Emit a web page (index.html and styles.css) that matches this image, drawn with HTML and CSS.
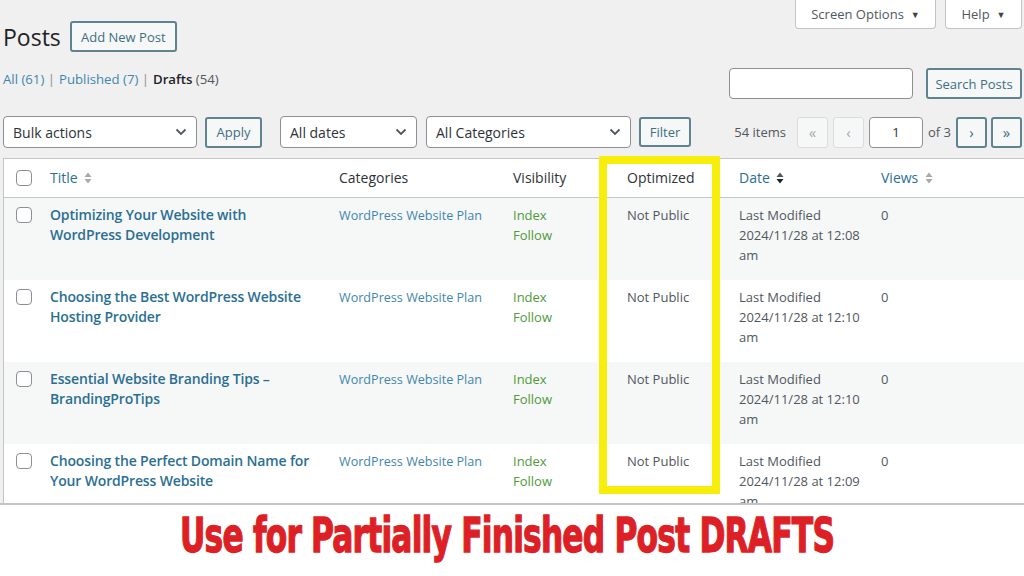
FILE: index.html
```html
<!DOCTYPE html>
<html lang="en">
<head>
    <meta charset="UTF-8">
    <meta name="viewport" content="width=device-width, initial-scale=1.0">
    <title>Posts</title>
    <link rel="stylesheet" href="styles.css">
</head>
<body>
    <div class="screen">
        <div class="top">
            <div class="heading">
                <h1>Posts</h1>
                <a class="btn" href="#">Add New Post</a>
            </div>
            <div class="meta">
                <span class="meta-tab tab-options">Screen Options <i class="caret">&#9660;</i></span>
                <span class="meta-tab tab-help">Help <i class="caret">&#9660;</i></span>
            </div>
        </div>

        <div class="views-row">
            <ul class="subsubsub">
                <li><a href="#">All <span class="count">(61)</span></a> |</li>
                <li><a href="#">Published <span class="count">(7)</span></a> |</li>
                <li><b>Drafts</b> <span class="count">(54)</span></li>
            </ul>
            <div class="search">
                <span class="search-input"></span>
                <a class="btn" href="#">Search Posts</a>
            </div>
        </div>

        <div class="tablenav">
            <span class="select w-bulk">Bulk actions <svg viewBox="0 0 12 8"><path d="M1.5 1.5 6 6l4.5-4.5" fill="none" stroke="#50575e" stroke-width="1.8"/></svg></span>
            <a class="btn" href="#">Apply</a>
            <span class="select w-dates">All dates <svg viewBox="0 0 12 8"><path d="M1.5 1.5 6 6l4.5-4.5" fill="none" stroke="#50575e" stroke-width="1.8"/></svg></span>
            <span class="select w-cats">All Categories <svg viewBox="0 0 12 8"><path d="M1.5 1.5 6 6l4.5-4.5" fill="none" stroke="#50575e" stroke-width="1.8"/></svg></span>
            <a class="btn btn-small" href="#">Filter</a>
            <div class="pages">
                <span class="num">54 items</span>
                <span class="pg off">&laquo;</span>
                <span class="pg off">&lsaquo;</span>
                <span class="pg-input">1</span>
                <span class="of">of 3</span>
                <span class="pg">&rsaquo;</span>
                <span class="pg">&raquo;</span>
            </div>
        </div>

        <table class="posts">
            <thead>
                <tr>
                    <th class="c-cb"><span class="cb"></span></th>
                    <th class="c-title">Title <svg class="sort" viewBox="0 0 8 12"><path d="M4 0.5 7.5 5h-7zM4 11.5 0.5 7h7z" fill="#a7aaad"/></svg></th>
                    <th class="c-cat plain">Categories</th>
                    <th class="c-vis plain">Visibility</th>
                    <th class="c-opt plain">Optimized</th>
                    <th class="c-date">Date <svg class="sort" viewBox="0 0 8 12"><path d="M4 0.5 7.5 5h-7z" fill="#50575e"/><path d="M4 11.5 0.5 7h7z" fill="#1d2327"/></svg></th>
                    <th class="c-views">Views <svg class="sort" viewBox="0 0 8 12"><path d="M4 0.5 7.5 5h-7zM4 11.5 0.5 7h7z" fill="#a7aaad"/></svg></th>
                </tr>
            </thead>
            <tbody>
                <tr>
                    <td><span class="cb"></span></td>
                    <td class="t-cell"><a class="title" href="#">Optimizing Your Website with WordPress Development</a></td>
                    <td><a class="cat" href="#">WordPress Website Plan</a></td>
                    <td class="seo">Index<br>Follow</td>
                    <td>Not Public</td>
                    <td>Last Modified<br>2024/11/28 at 12:08 am</td>
                    <td>0</td>
                </tr>
                <tr>
                    <td><span class="cb"></span></td>
                    <td class="t-cell"><a class="title" href="#">Choosing the Best WordPress Website Hosting Provider</a></td>
                    <td><a class="cat" href="#">WordPress Website Plan</a></td>
                    <td class="seo">Index<br>Follow</td>
                    <td>Not Public</td>
                    <td>Last Modified<br>2024/11/28 at 12:10 am</td>
                    <td>0</td>
                </tr>
                <tr>
                    <td><span class="cb"></span></td>
                    <td class="t-cell"><a class="title" href="#">Essential Website Branding Tips &ndash; BrandingProTips</a></td>
                    <td><a class="cat" href="#">WordPress Website Plan</a></td>
                    <td class="seo">Index<br>Follow</td>
                    <td>Not Public</td>
                    <td>Last Modified<br>2024/11/28 at 12:10 am</td>
                    <td>0</td>
                </tr>
                <tr>
                    <td><span class="cb"></span></td>
                    <td class="t-cell"><a class="title" href="#">Choosing the Perfect Domain Name for Your WordPress Website</a></td>
                    <td><a class="cat" href="#">WordPress Website Plan</a></td>
                    <td class="seo">Index<br>Follow</td>
                    <td>Not Public</td>
                    <td>Last Modified<br>2024/11/28 at 12:09 am</td>
                    <td>0</td>
                </tr>
            </tbody>
        </table>

        <!-- yellow marker round the Optimized column -->
        <div class="highlight"></div>
    </div>

    <div class="caption">
        <span>Use for Partially Finished Post DRAFTS</span>
    </div>
</body>
</html>
```

FILE: styles.css
```css
body {
    margin: 0;
    font-family: "Open Sans", "Noto Sans", sans-serif;
    font-size: 13px;
    color: #3c434a;
    background: #fff;
    overflow: hidden;
}

a {
    text-decoration: none;
    color: #2a6f93;
}

.screen {
    position: relative;
    height: 503px;
    overflow: hidden;
    background: #f0f0f1;
    border-bottom: 2px solid #c3c4c7;
    padding-left: 3px;
}

/* top: heading + screen meta tabs */
.top {
    display: flex;
    justify-content: space-between;
    align-items: flex-start;
    padding-right: 2px;
}

.heading {
    display: flex;
    align-items: center;
    gap: 9px;
    margin-top: 19px;
    height: 35px;
}

.heading h1 {
    margin: 0;
    font-size: 23px;
    font-weight: 400;
    color: #1d2327;
}

.heading .btn {
    width: 107px;
}

.meta {
    display: flex;
    gap: 9px;
}

.meta-tab {
    display: flex;
    align-items: center;
    justify-content: center;
    gap: 7px;
    box-sizing: border-box;
    height: 29px;
    background: #fff;
    border: 1px solid #c3c4c7;
    border-top: none;
    border-radius: 0 0 4px 4px;
    color: #50575e;
    font-size: 13px;
    white-space: nowrap;
}

.tab-options {
    width: 141px;
}

.tab-help {
    width: 77px;
}

.caret {
    font-style: normal;
    font-size: 9px;
    color: #3c434a;
}

.btn {
    display: inline-flex;
    align-items: center;
    justify-content: center;
    box-sizing: border-box;
    height: 31px;
    padding: 0 6px;
    border: 2px solid #5f8391;
    border-radius: 3px;
    background: #f6f7f7;
    color: #3d6f82;
    font-size: 13px;
    white-space: nowrap;
}

/* views + search */
.views-row {
    display: flex;
    justify-content: space-between;
    align-items: flex-start;
    margin-top: 14px;
    padding-right: 2px;
}

.subsubsub {
    display: flex;
    gap: 4px;
    margin: 0;
    padding: 0;
    list-style: none;
    line-height: 22px;
    font-size: 13.2px;
    color: #8c8f94;
}

.subsubsub a {
    color: #3f86ad;
}

.subsubsub b {
    font-weight: 600;
    color: #1d2327;
}

.subsubsub .count {
    color: #50575e;
}

.subsubsub a .count {
    color: #3f86ad;
}

.search {
    display: flex;
    gap: 13px;
}

.search-input {
    display: block;
    box-sizing: border-box;
    width: 184px;
    height: 31px;
    background: #fff;
    border: 1px solid #8c8f94;
    border-radius: 4px;
}

.search .btn {
    width: 96px;
}

/* filters */
.tablenav {
    display: flex;
    align-items: center;
    margin-top: 17px;
    height: 32px;
}

.select {
    display: flex;
    align-items: center;
    justify-content: space-between;
    box-sizing: border-box;
    height: 32px;
    padding: 0 9px 0 9px;
    background: #fff;
    border: 1px solid #8c8f94;
    border-radius: 4px;
    color: #2c3338;
    font-size: 14px;
}

.select svg {
    width: 12px;
    height: 8px;
}

.w-bulk { width: 194px; margin-right: 8px; }
.w-dates { width: 137px; margin-left: 18px; margin-right: 9px; }
.w-cats { width: 205px; margin-right: 8px; }

.tablenav .btn {
    width: 57px;
}

.tablenav .btn-small {
    width: 52px;
    height: 30px;
}

.pages {
    display: flex;
    align-items: center;
    margin-left: auto;
    padding-right: 2px;
    color: #50575e;
}

.num {
    margin-right: 11px;
}

.pg {
    display: flex;
    align-items: center;
    justify-content: center;
    box-sizing: border-box;
    width: 31px;
    height: 31px;
    margin-left: 4px;
    background: #f6f7f7;
    border: 2px solid #5f8391;
    border-radius: 3px;
    color: #3d6f82;
    font-size: 15px;
}

.pg.off {
    border: 1px solid #dcdcde;
    color: #a7aaad;
    margin-left: 0;
    margin-right: 5px;
}

.pg-input {
    display: flex;
    align-items: center;
    justify-content: center;
    box-sizing: border-box;
    width: 54px;
    height: 31px;
    background: #fff;
    border: 1px solid #8c8f94;
    border-radius: 4px;
    color: #2c3338;
}

.of {
    margin: 0 1px 0 5px;
}

/* posts table */
.posts {
    margin-top: 10px;
    width: 1040px;
    border-collapse: collapse;
    table-layout: fixed;
    background: #fff;
    border: 1px solid #c3c4c7;
}

.posts th,
.posts td {
    text-align: left;
    vertical-align: top;
    padding: 7px 8px 15px;
    line-height: 20px;
    font-weight: 400;
}

.posts th {
    padding: 9px 8px 9px;
    font-size: 14px;
    color: #2c3338;
    border-bottom: 1px solid #c3c4c7;
}

.posts th.c-title,
.posts th.c-date,
.posts th.c-views {
    color: #2a6f93;
}

.c-cb { width: 22px; }
.posts th.c-title { width: 264px; padding-right: 17px; }
.posts td.t-cell { padding-right: 17px; }
.c-cat { width: 158px; }
.c-vis { width: 98px; }
.c-opt { width: 96px; }
.c-date { width: 126px; }

.sort {
    width: 8px;
    height: 12px;
    margin-left: 3px;
    vertical-align: -1px;
}

.posts tbody tr:nth-child(odd) {
    background: #f6f7f7;
}

.posts td {
    color: #50575e;
}

.cb {
    display: block;
    box-sizing: border-box;
    width: 16px;
    height: 16px;
    margin: 2px 0 0 4px;
    border: 1px solid #8c8f94;
    border-radius: 4px;
    background: #fff;
}

.title {
    font-size: 14px;
    font-weight: 600;
    letter-spacing: -0.15px;
    color: #2a6f93;
}

.cat {
    font-size: 12.6px;
    color: #3f86ad;
}

.posts td.seo {
    color: #4f9a3a;
}

.highlight {
    position: absolute;
    left: 599px;
    top: 156px;
    width: 105px;
    height: 322px;
    border: 8px solid #f7ee0a;
}

/* caption under the screenshot */
.caption {
    height: 71px;
    text-align: center;
    background: #fff;
}

.caption span {
    display: inline-block;
    margin-top: 4px;
    margin-right: 10px;
    font-family: "DejaVu Sans Condensed", "Liberation Sans Narrow", sans-serif;
    font-weight: 700;
    font-size: 44px;
    color: #dd1f26;
    -webkit-text-stroke: 1.2px #dd1f26;
    transform: scale(0.79, 1.1);
    letter-spacing: -1px;
}
```
